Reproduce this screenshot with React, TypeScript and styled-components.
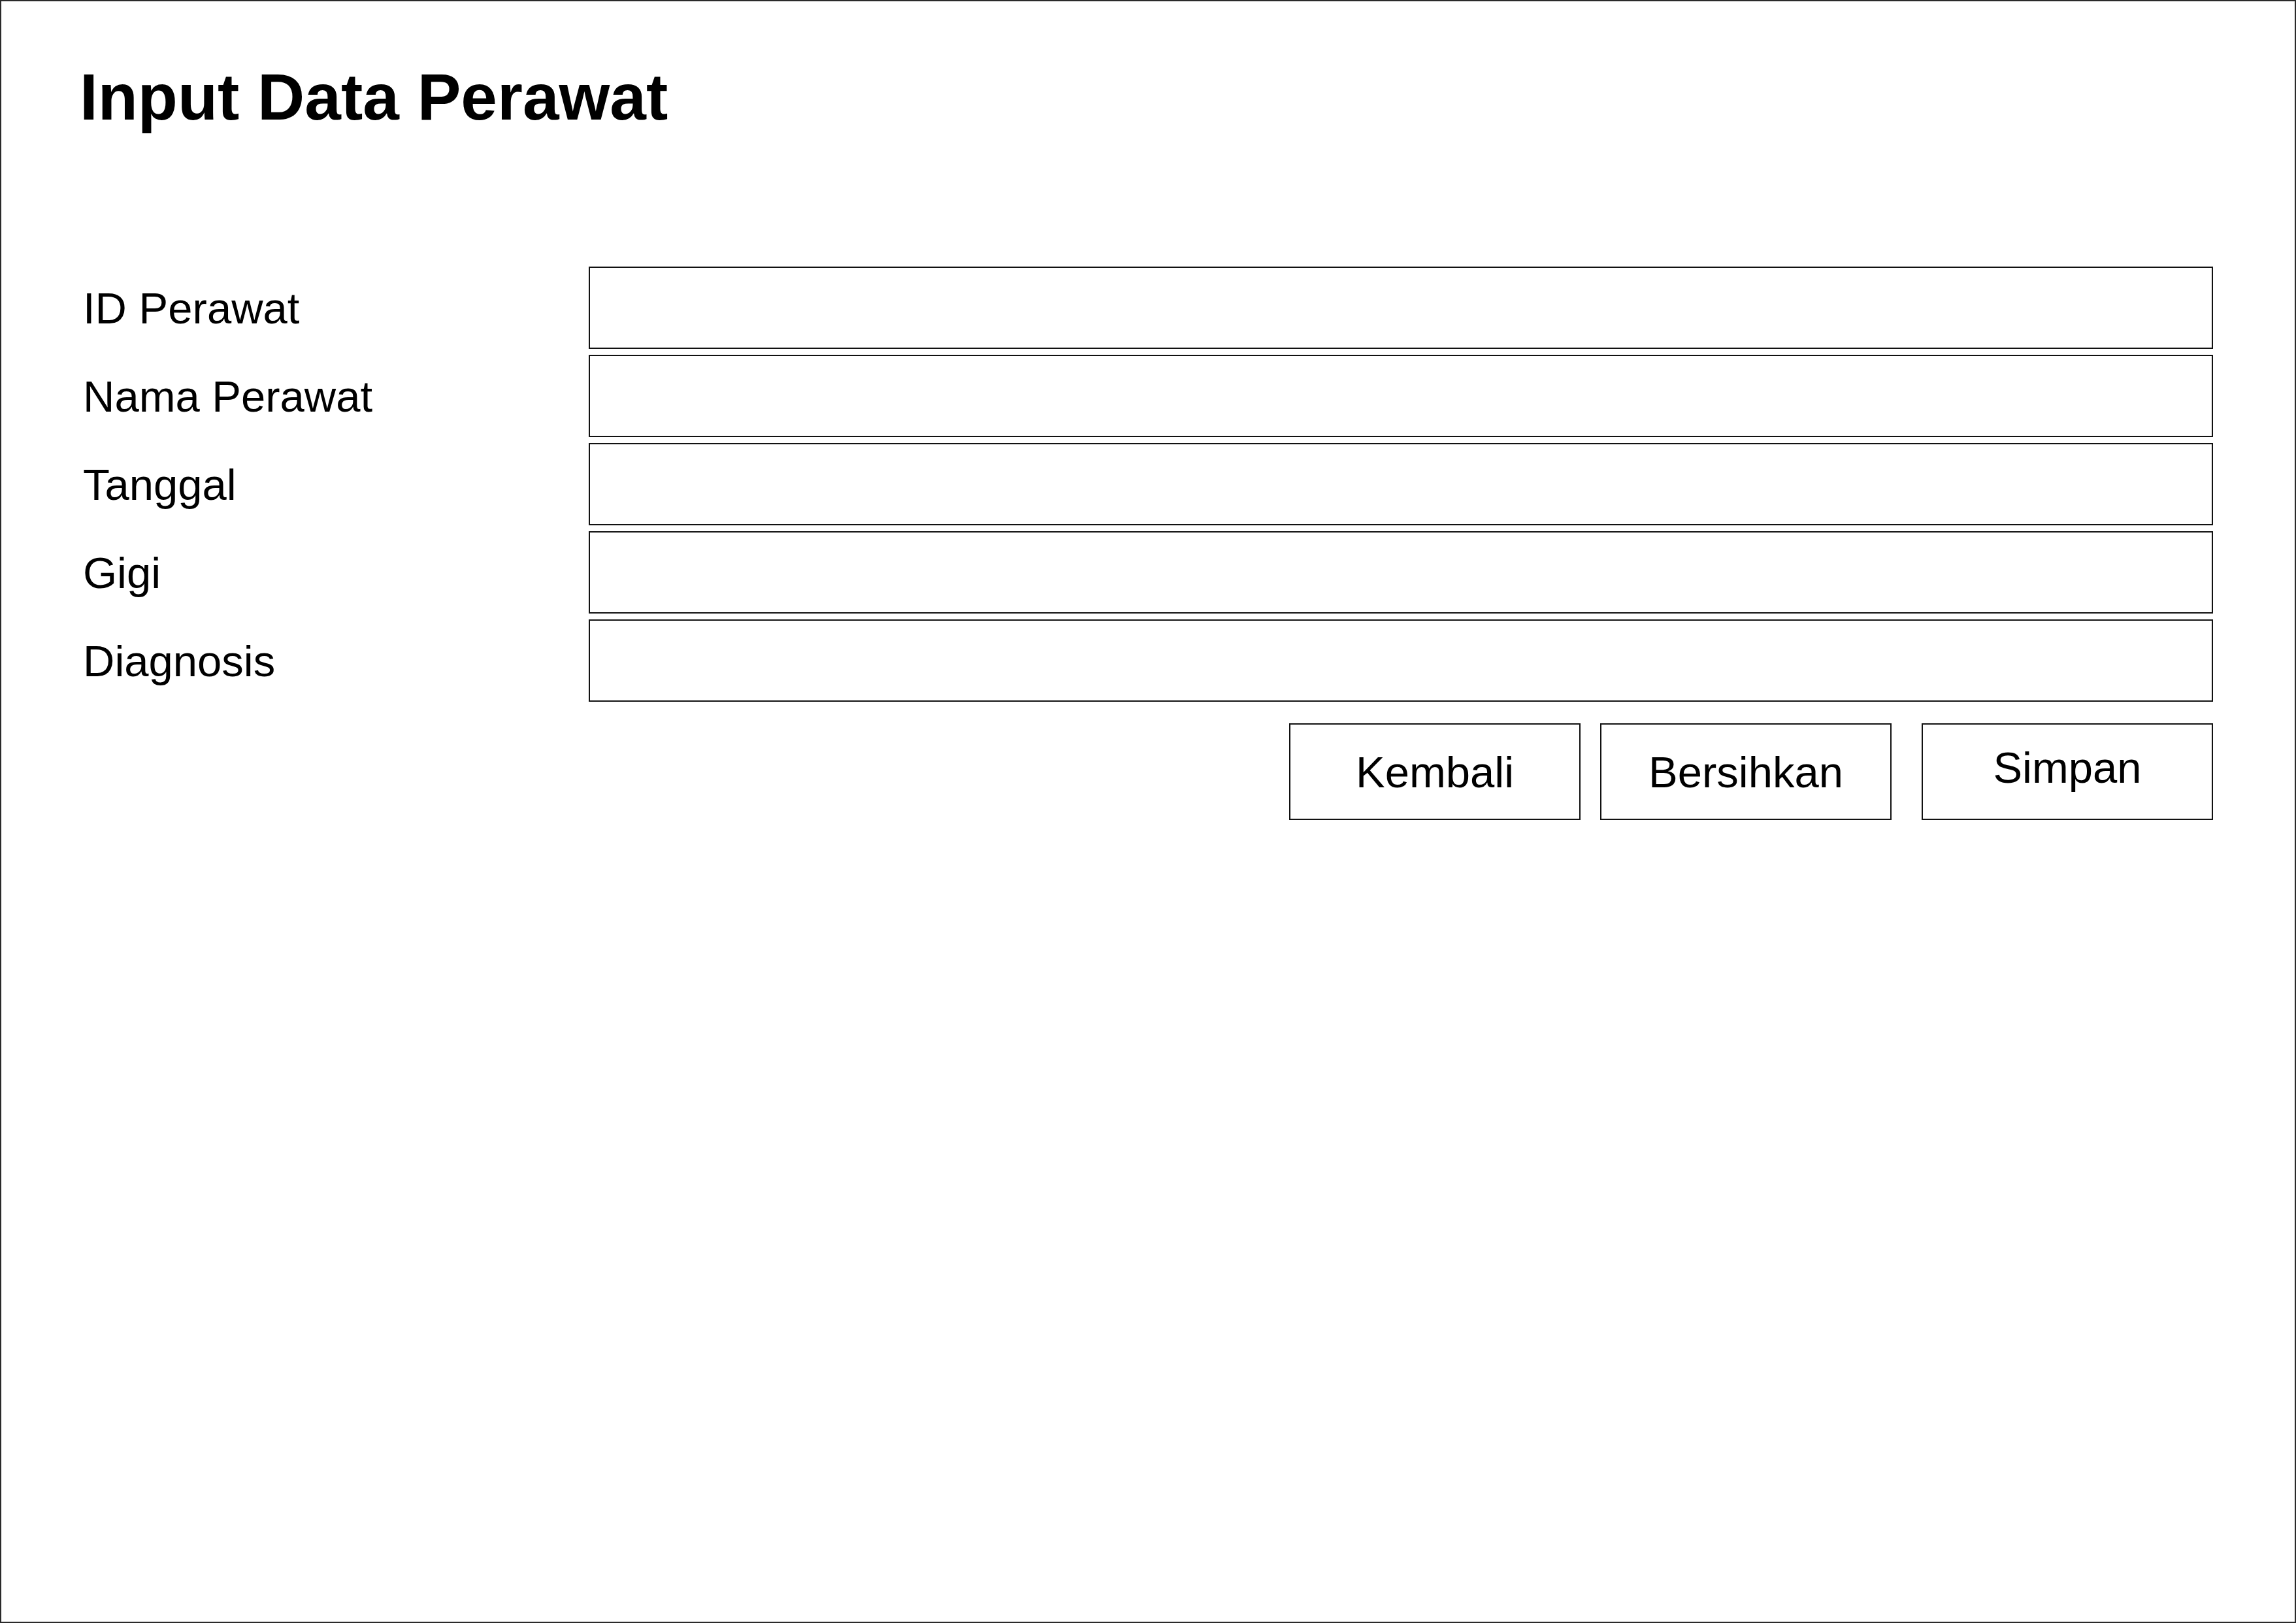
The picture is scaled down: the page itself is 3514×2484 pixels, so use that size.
import React from "react";
import styled, { createGlobalStyle } from "styled-components";

const GlobalStyle = createGlobalStyle`
  html, body, #root {
    margin: 0;
    padding: 0;
    height: 100%;
    background: #ffffff;
  }
  body {
    font-family: "Liberation Sans", Arial, sans-serif;
    color: #000;
  }
  * { box-sizing: border-box; }
`;

const Frame = styled.div`
  width: 100%;
  height: 100%;
  border: 2px solid #2a2a2a;
  padding: 90px 125px 0 120px;
  background: #fff;
`;

const Title = styled.h1`
  margin: 0;
  font-family: "Liberation Sans", Arial, sans-serif;
  font-weight: 700;
  font-size: 100px;
  line-height: 112px;
  color: #000;
`;

const Form = styled.form`
  margin-top: 204px;
  display: grid;
  grid-template-columns: 779px 1fr;
  row-gap: 9px;
  align-items: center;
`;

const Label = styled.label`
  padding-left: 5px;
  font-size: 67px;
  line-height: 1;
  color: #000;
  white-space: nowrap;
`;

const Field = styled.input`
  display: block;
  width: 100%;
  height: 126px;
  margin: 0;
  border: 2px solid #111;
  border-radius: 0;
  background: #fff;
  outline: none;
  font-family: "Liberation Sans", Arial, sans-serif;
  font-size: 60px;
  padding: 0 20px;
`;

const ButtonRow = styled.div`
  grid-column: 2;
  margin-top: 24px;
  display: flex;
  justify-content: flex-end;
`;

const Button = styled.button<{ $gapBefore?: number; $raise?: number }>`
  width: 446px;
  height: 148px;
  margin: 0 0 0 ${(p) => p.$gapBefore ?? 0}px;
  padding: 0 0 ${(p) => (p.$raise ?? 0) * 2}px 0;
  border: 2px solid #111;
  border-radius: 0;
  background: #fff;
  font-family: "Liberation Sans", Arial, sans-serif;
  font-size: 67px;
  color: #000;
  cursor: pointer;
  display: flex;
  align-items: center;
  justify-content: center;
`;

const fields = ["ID Perawat", "Nama Perawat", "Tanggal", "Gigi", "Diagnosis"];

export default function App() {
  return (
    <>
      <GlobalStyle />
      <Frame>
        <Title>Input Data Perawat</Title>
        <Form onSubmit={(e) => e.preventDefault()}>
          {fields.map((f, i) => (
            <React.Fragment key={f}>
              <Label htmlFor={`f${i}`}>{f}</Label>
              <Field id={`f${i}`} type="text" />
            </React.Fragment>
          ))}
          <ButtonRow>
            <Button type="button">Kembali</Button>
            <Button type="button" $gapBefore={30}>Bersihkan</Button>
            <Button type="submit" $gapBefore={46} $raise={7}>Simpan</Button>
          </ButtonRow>
        </Form>
      </Frame>
    </>
  );
}
